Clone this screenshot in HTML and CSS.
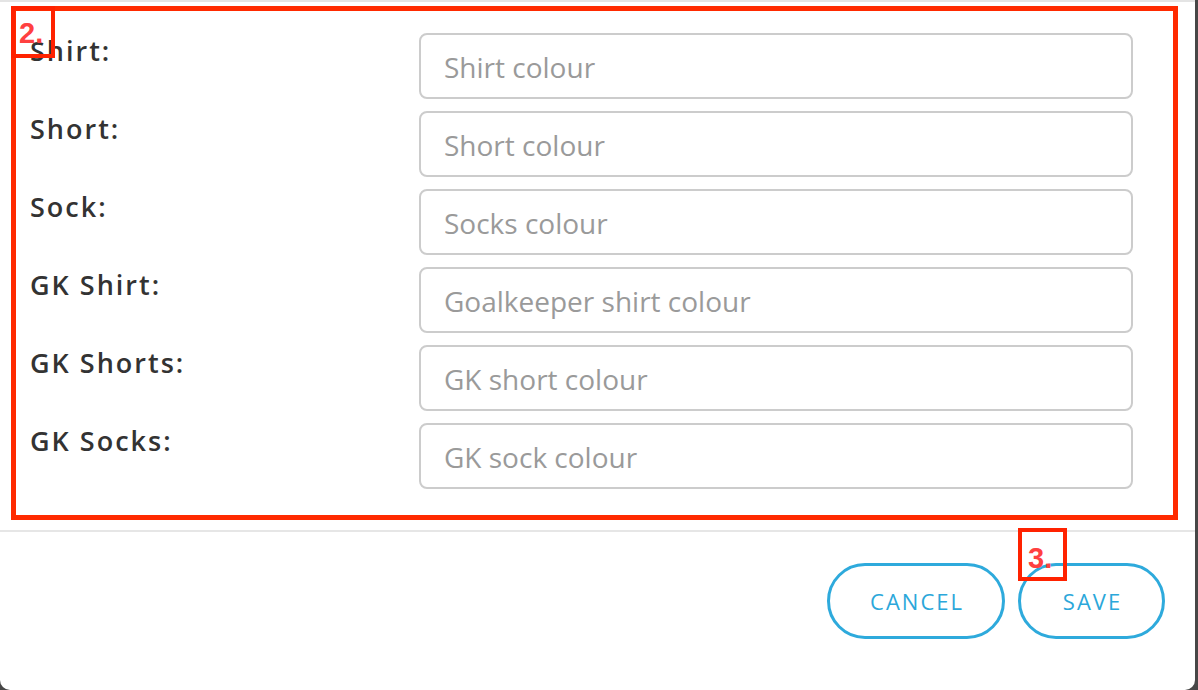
FILE: index.html
```html
<!DOCTYPE html>
<html lang="en">
<head>
<meta charset="utf-8">
<title>Kit colours</title>
<link rel="stylesheet" href="styles.css">
</head>
<body>
<div class="modal">
  <div class="modal-body">
    <form class="kit-form">
      <div class="row"><label class="label" for="shirt">Shirt:</label><input class="field" id="shirt" type="text" placeholder="Shirt colour"></div>
      <div class="row"><label class="label" for="short">Short:</label><input class="field" id="short" type="text" placeholder="Short colour"></div>
      <div class="row"><label class="label" for="sock">Sock:</label><input class="field" id="sock" type="text" placeholder="Socks colour"></div>
      <div class="row"><label class="label" for="gkshirt">GK Shirt:</label><input class="field" id="gkshirt" type="text" placeholder="Goalkeeper shirt colour"></div>
      <div class="row"><label class="label" for="gkshorts">GK Shorts:</label><input class="field" id="gkshorts" type="text" placeholder="GK short colour"></div>
      <div class="row"><label class="label" for="gksocks">GK Socks:</label><input class="field" id="gksocks" type="text" placeholder="GK sock colour"></div>
    </form>
    <div class="marker marker-2">2.</div>
  </div>
  <div class="modal-footer">
    <button class="btn btn-cancel" type="button">CANCEL</button>
    <button class="btn btn-save" type="button">SAVE</button>
    <div class="marker marker-3">3.</div>
  </div>
</div>
</body>
</html>
```

FILE: styles.css
```css
* { box-sizing: border-box; }

html, body {
  margin: 0;
  padding: 0;
  height: 100%;
}

body {
  background: #474747;
  font-family: "Open Sans", "Liberation Sans", sans-serif;
  overflow: hidden;
}

.modal {
  width: 1195px;
  height: 690px;
  background: #ffffff;
  border-top: 2px solid #e4e4e4;
  border-radius: 0 0 10px 10px;
  display: flex;
  flex-direction: column;
}

.modal-body {
  position: relative;
  padding: 4px 17px 10px 11px;
  border-bottom: 2px solid #e6e6e6;
}

.kit-form {
  margin: 0;
  border: 5px solid #ff2a00;
  padding: 22px 40px 26px 14px;
  display: flex;
  flex-direction: column;
  gap: 12px;
}

.row {
  display: flex;
  align-items: flex-start;
  height: 66px;
}

.label {
  width: 389px;
  flex: none;
  font-size: 27px;
  line-height: 36px;
  font-weight: 600;
  letter-spacing: 2px;
  color: #333333;
}

.field {
  flex: 1;
  height: 66px;
  border: 2px solid #cccccc;
  border-radius: 8px;
  padding: 2px 23px 0;
  font-family: "Open Sans", "Liberation Sans", sans-serif;
  font-size: 28px;
  color: #333333;
  background: #ffffff;
  outline: none;
}

.field::placeholder {
  color: #9a9a9a;
  opacity: 1;
}

.modal-footer {
  position: relative;
  display: flex;
  justify-content: flex-end;
  gap: 13px;
  padding: 31px 30px 0 0;
}

.btn {
  height: 76px;
  border: 3px solid #2eaadc;
  border-radius: 38px;
  background: #ffffff;
  color: #2ba7da;
  font-family: "Open Sans", "Liberation Sans", sans-serif;
  font-size: 22px;
  letter-spacing: 2px;
  padding: 0 0 0 2px;
  text-align: center;
}

.btn-cancel { width: 178px; }
.btn-save { width: 147px; }

.marker {
  position: absolute;
  border: 4px solid #ff2200;
  color: #ff4040;
  font-family: "Liberation Sans", Arial, sans-serif;
  font-weight: 700;
  font-size: 29px;
  line-height: 1;
}

.marker-2 {
  left: 11px;
  top: 4px;
  width: 44px;
  height: 52px;
  padding: 9px 0 0 4px;
}

.marker-3 {
  left: 1018px;
  top: -4px;
  width: 49px;
  height: 53px;
  padding: 12px 0 0 6px;
}
```
